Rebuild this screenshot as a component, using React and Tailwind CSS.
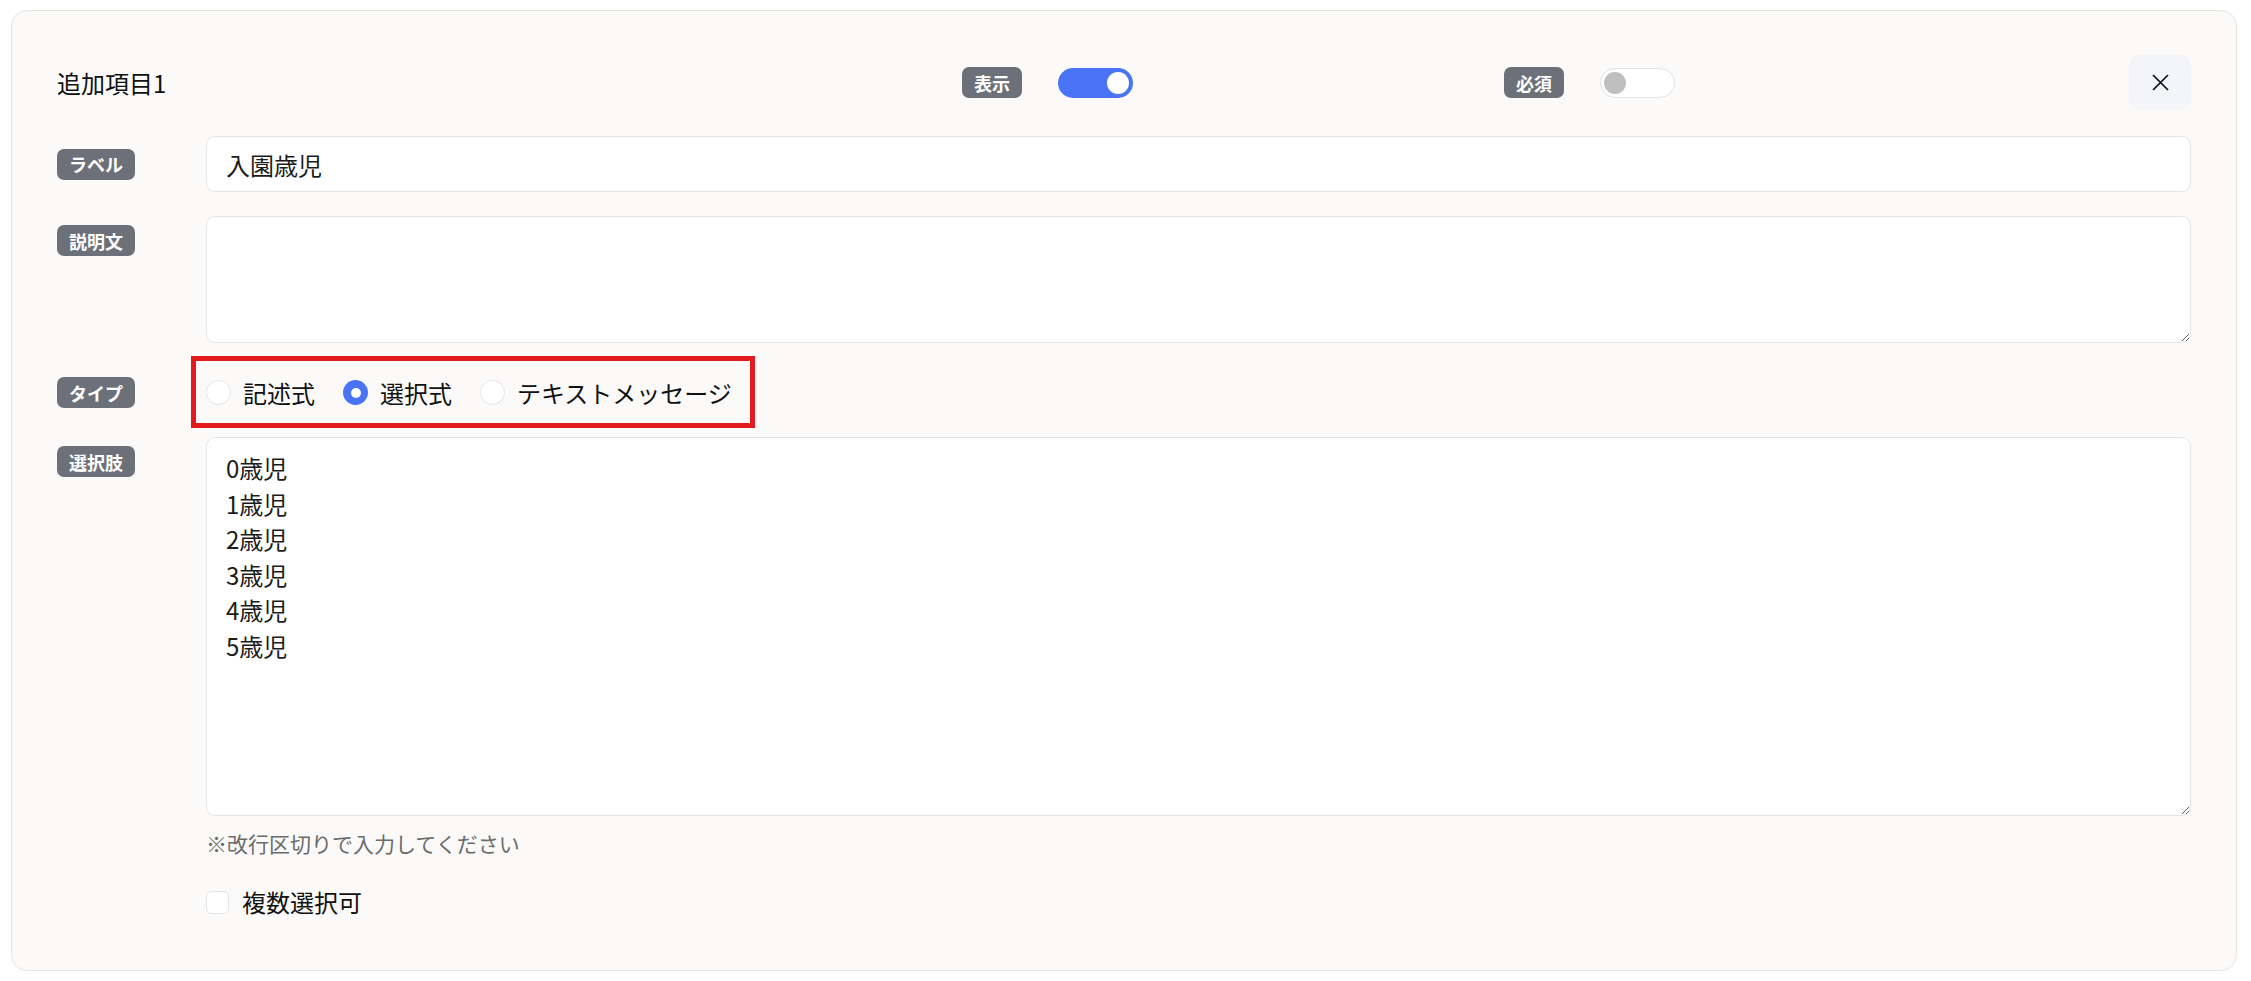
import React from "react";

function Badge({ children, className = "" }) {
  return (
    <span
      className={
        "inline-flex h-[31px] items-center rounded-[7px] bg-[#6c7179] px-3 text-[18px] font-bold leading-none text-white " +
        className
      }
    >
      {children}
    </span>
  );
}

function Radio({ checked, label }) {
  return (
    <div className="flex items-center">
      {checked ? (
        <span className="flex h-[25px] w-[25px] items-center justify-center rounded-full bg-[#4a74f5]">
          <span className="h-[10px] w-[10px] rounded-full bg-white" />
        </span>
      ) : (
        <span className="h-[25px] w-[25px] rounded-full border border-[#e3e5e9] bg-white" />
      )}
      <span className="ml-[12px] text-[24px] leading-none text-[#111]">{label}</span>
    </div>
  );
}

export default function App() {
  return (
    <div className="min-h-[981px] bg-white pb-[11px] pl-[11px] pr-[14px] pt-[10px] font-['Noto_Sans_CJK_JP','Noto_Sans',sans-serif] text-[#1b1b1b]">
      <div className="rounded-2xl border border-[#e6e4e1] bg-[#fbfaf9] px-[45px] pb-[54px] pt-[44px]">
        {/* header */}
        <div className="flex h-[55px] items-center">
          <div className="w-[905px] text-[24px] leading-none text-[#111]">追加項目1</div>
          <div className="flex w-[542px] items-center">
            <Badge>表示</Badge>
            <span className="ml-[36px] flex h-[30px] w-[75px] items-center justify-end rounded-full bg-[#4a74f5] pr-[4px]">
              <span className="h-[22px] w-[22px] rounded-full bg-white" />
            </span>
          </div>
          <div className="flex flex-1 items-center">
            <Badge>必須</Badge>
            <span className="ml-[36px] flex h-[30px] w-[75px] items-center rounded-full border border-[#dfe3e8] bg-white pl-[3px]">
              <span className="h-[22px] w-[22px] rounded-full bg-[#bfbfbf]" />
            </span>
          </div>
          <button className="flex h-[55px] w-[62px] items-center justify-center rounded-[10px] bg-[#f3f5f8]">
            <svg width="17" height="17" viewBox="0 0 17 17" fill="none" stroke="#111" strokeWidth="1.7">
              <path d="M1 1L16 16M16 1L1 16" />
            </svg>
          </button>
        </div>

        {/* label */}
        <div className="mt-[26px] flex items-center">
          <div className="w-[149px]">
            <Badge>ラベル</Badge>
          </div>
          <input
            readOnly
            value="入園歳児"
            className="h-[56px] flex-1 rounded-[9px] border border-[#e1e4e9] bg-white px-[19px] text-[24px] text-[#1b1b1b] outline-none"
          />
        </div>

        {/* description */}
        <div className="mt-[24px] flex items-start">
          <div className="w-[149px] pt-[9px]">
            <Badge>説明文</Badge>
          </div>
          <textarea
            readOnly
            defaultValue=""
            className="h-[127px] flex-1 rounded-[9px] border border-[#e1e4e9] bg-white px-[19px] py-[12px] text-[24px] outline-none"
          />
        </div>

        {/* type */}
        <div className="mt-[34px] flex h-[31px] items-center">
          <div className="w-[149px]">
            <Badge>タイプ</Badge>
          </div>
          <div className="relative flex items-center gap-[28px]">
            <Radio label="記述式" />
            <Radio checked label="選択式" />
            <Radio label="テキストメッセージ" />
            <div className="pointer-events-none absolute left-[-15px] top-[-24px] h-[72px] w-[564px] border-[5px] border-[#e31b1f]" />
          </div>
        </div>

        {/* options */}
        <div className="mt-[29px] flex items-start">
          <div className="w-[149px] pt-[9px]">
            <Badge>選択肢</Badge>
          </div>
          <textarea
            readOnly
            defaultValue={"0歳児\n1歳児\n2歳児\n3歳児\n4歳児\n5歳児"}
            className="h-[379px] flex-1 rounded-[9px] border border-[#e1e4e9] bg-white px-[19px] py-[12px] text-[24px] leading-[35.6px] text-[#1b1b1b] outline-none"
          />
        </div>

        <div className="ml-[149px] mt-[13px] h-[28px] text-[21px] leading-[28px] text-[#6b6b6b]">
          ※改行区切りで入力してください
        </div>

        <div className="ml-[149px] mt-[31px] flex h-[28px] items-center">
          <span className="h-[23px] w-[23px] rounded-[5px] border border-[#e0e3e8] bg-white" />
          <span className="ml-[13px] text-[24px] leading-none text-[#111]">複数選択可</span>
        </div>
      </div>
    </div>
  );
}
